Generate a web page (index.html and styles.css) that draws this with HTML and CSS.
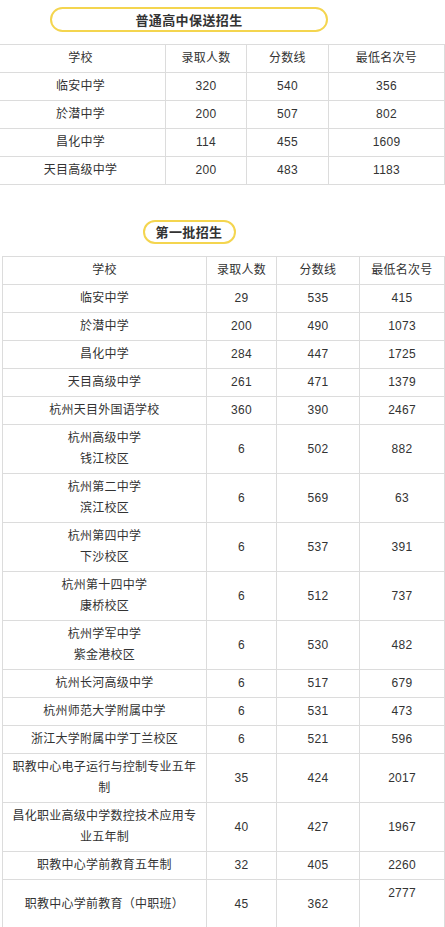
FILE: index.html
```html
<!DOCTYPE html>
<html lang="zh-CN">
<head>
<meta charset="utf-8">
<title>招生</title>
<link rel="stylesheet" href="styles.css">
</head>
<body>
<div class="title-row first">
  <div class="pill pill-wide">普通高中保送招生</div>
</div>
<table class="score t1">
  <colgroup><col class="c1"><col class="c2"><col class="c3"><col class="c4"></colgroup>
  <tr><td>学校</td><td>录取人数</td><td>分数线</td><td>最低名次号</td></tr>
  <tr><td>临安中学</td><td>320</td><td>540</td><td>356</td></tr>
  <tr><td>於潜中学</td><td>200</td><td>507</td><td>802</td></tr>
  <tr><td>昌化中学</td><td>114</td><td>455</td><td>1609</td></tr>
  <tr><td>天目高级中学</td><td>200</td><td>483</td><td>1183</td></tr>
</table>
<div class="title-row second">
  <div class="pill pill-narrow">第一批招生</div>
</div>
<table class="score t2">
  <colgroup><col class="c1"><col class="c2"><col class="c3"><col class="c4"></colgroup>
  <tr><td>学校</td><td>录取人数</td><td>分数线</td><td>最低名次号</td></tr>
  <tr><td>临安中学</td><td>29</td><td>535</td><td>415</td></tr>
  <tr><td>於潜中学</td><td>200</td><td>490</td><td>1073</td></tr>
  <tr><td>昌化中学</td><td>284</td><td>447</td><td>1725</td></tr>
  <tr><td>天目高级中学</td><td>261</td><td>471</td><td>1379</td></tr>
  <tr><td>杭州天目外国语学校</td><td>360</td><td>390</td><td>2467</td></tr>
  <tr><td>杭州高级中学<br>钱江校区</td><td>6</td><td>502</td><td>882</td></tr>
  <tr><td>杭州第二中学<br>滨江校区</td><td>6</td><td>569</td><td>63</td></tr>
  <tr><td>杭州第四中学<br>下沙校区</td><td>6</td><td>537</td><td>391</td></tr>
  <tr><td>杭州第十四中学<br>康桥校区</td><td>6</td><td>512</td><td>737</td></tr>
  <tr><td>杭州学军中学<br>紫金港校区</td><td>6</td><td>530</td><td>482</td></tr>
  <tr><td>杭州长河高级中学</td><td>6</td><td>517</td><td>679</td></tr>
  <tr><td>杭州师范大学附属中学</td><td>6</td><td>531</td><td>473</td></tr>
  <tr><td>浙江大学附属中学丁兰校区</td><td>6</td><td>521</td><td>596</td></tr>
  <tr><td>职教中心电子运行与控制专业五年制</td><td>35</td><td>424</td><td>2017</td></tr>
  <tr><td>昌化职业高级中学数控技术应用专业五年制</td><td>40</td><td>427</td><td>1967</td></tr>
  <tr><td>职教中心学前教育五年制</td><td>32</td><td>405</td><td>2260</td></tr>
  <tr><td>职教中心学前教育（中职班）</td><td>45</td><td>362</td><td>2777<br>&nbsp;</td></tr>
</table>
</body>
</html>
```
FILE: styles.css
```css
html, body {
  margin: 0;
  padding: 0;
  background: #fff;
}
body {
  width: 445px;
  overflow: hidden;
  font-family: "Liberation Sans", "Noto Sans CJK SC", sans-serif;
  color: #333;
}
.title-row {
  width: 378px;
  display: flex;
  justify-content: center;
}
.title-row.first {
  padding-top: 7px;
}
.title-row.second {
  margin-top: 35px;
}
.pill {
  box-sizing: border-box;
  border: 2px solid #f4d54f;
  text-align: center;
  font-family: "Noto Sans CJK SC", sans-serif;
  font-weight: bold;
  font-size: 13px;
  letter-spacing: 0.4px;
  color: #333;
}
.pill-wide {
  width: 278px;
  height: 25px;
  line-height: 21px;
  border-radius: 13px;
}
.pill-narrow {
  width: 93px;
  height: 24px;
  line-height: 20px;
  border-radius: 12px;
}
.score {
  border-collapse: collapse;
  table-layout: fixed;
  margin-top: 12px;
  font-size: 12px;
}
.score td {
  border: 1px solid #dcdcdc;
  padding: 3px 8px;
  line-height: 21px;
  text-align: center;
  vertical-align: middle;
  letter-spacing: 0.25px;
}
.t1 {
  margin-left: -5px;
  width: 449px;
}
.t1 .c1 { width: 170px; }
.t1 .c2 { width: 81px; }
.t1 .c3 { width: 82px; }
.t1 .c4 { width: 116px; }
.t2 {
  margin-left: 2px;
  width: 442px;
}
.t2 .c1 { width: 204px; }
.t2 .c2 { width: 70px; }
.t2 .c3 { width: 83px; }
.t2 .c4 { width: 85px; }
```
